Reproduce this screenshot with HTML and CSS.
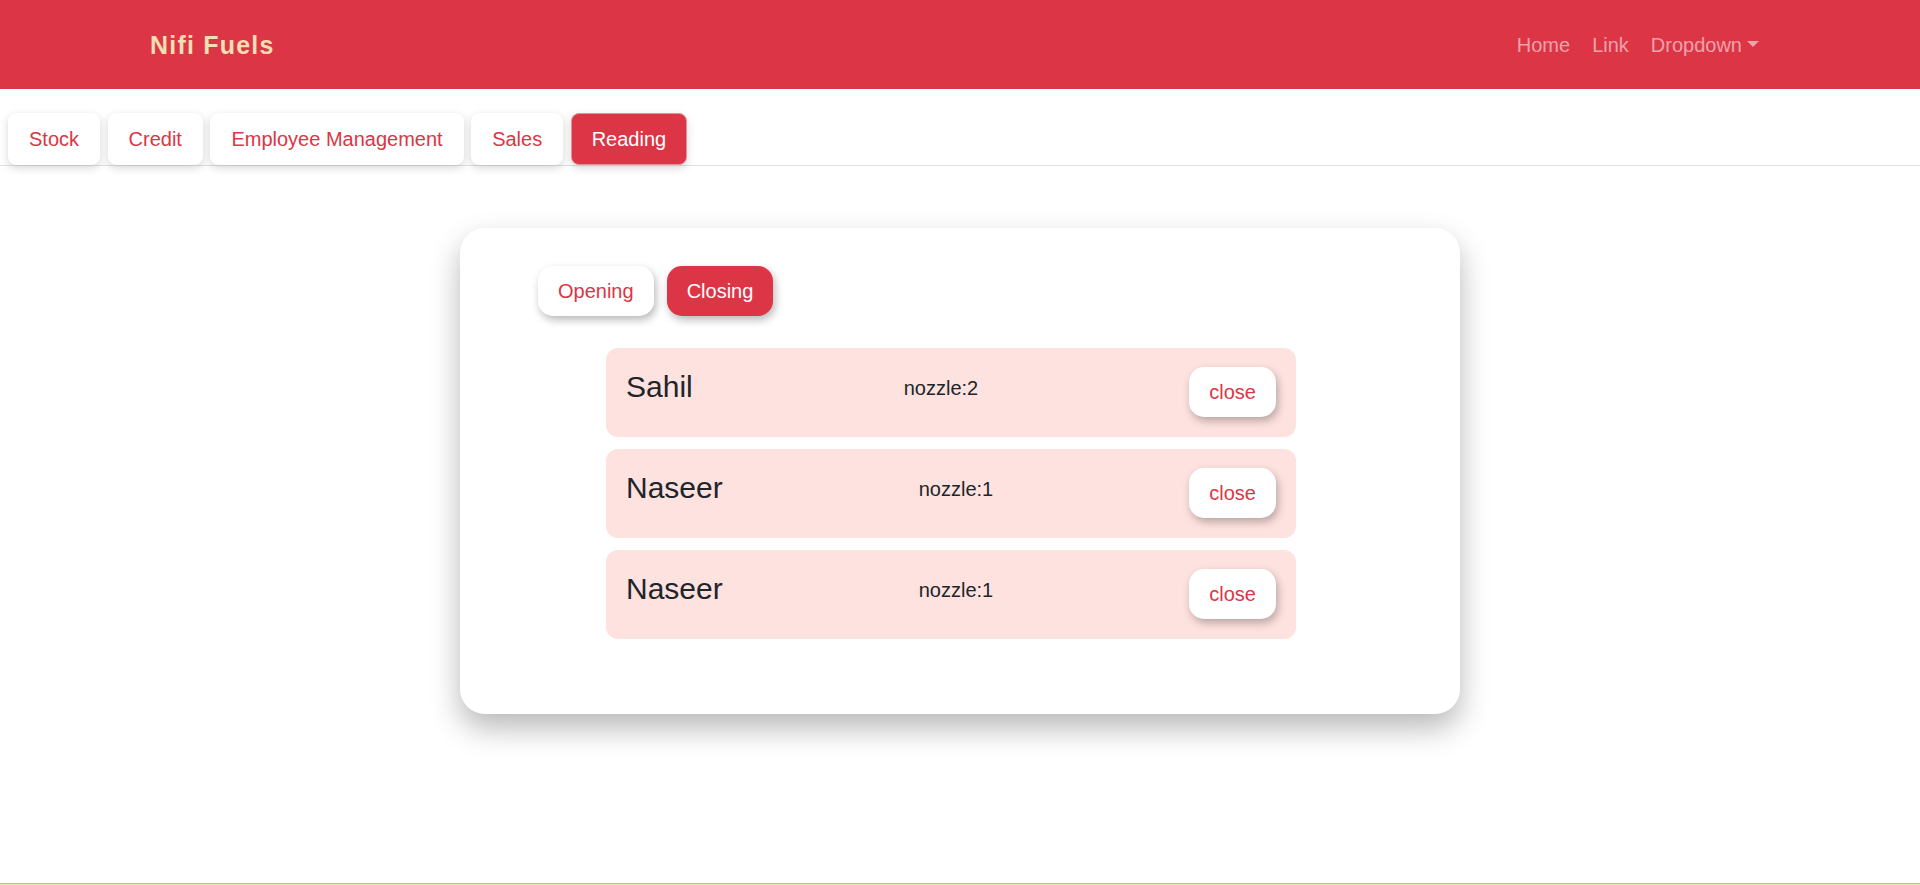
FILE: index.html
```html
<!DOCTYPE html>
<html lang="en">
<head>
<meta charset="utf-8">
<title>Nifi Fuels</title>
<link rel="stylesheet" href="styles.css">
</head>
<body>
<div class="page">
  <nav class="navbar">
    <div class="nav-inner">
      <a class="brand" href="#">Nifi Fuels</a>
      <ul class="nav-links">
        <li><a class="nav-link" href="#">Home</a></li>
        <li><a class="nav-link" href="#">Link</a></li>
        <li><a class="nav-link dropdown" href="#">Dropdown<span class="caret"></span></a></li>
      </ul>
    </div>
  </nav>

  <div class="tabs">
    <button class="tab">Stock</button>
    <button class="tab">Credit</button>
    <button class="tab">Employee Management</button>
    <button class="tab">Sales</button>
    <button class="tab tab-active">Reading</button>
  </div>

  <main class="main">
    <section class="card">
      <div class="toggle">
        <button class="pill">Opening</button>
        <button class="pill pill-active">Closing</button>
      </div>
      <div class="rows">
        <div class="row">
          <h3 class="name">Sahil</h3>
          <p class="nozzle">nozzle:2</p>
          <button class="pill">close</button>
        </div>
        <div class="row">
          <h3 class="name">Naseer</h3>
          <p class="nozzle">nozzle:1</p>
          <button class="pill">close</button>
        </div>
        <div class="row">
          <h3 class="name">Naseer</h3>
          <p class="nozzle">nozzle:1</p>
          <button class="pill">close</button>
        </div>
      </div>
    </section>
  </main>

  <footer class="bottom-line"></footer>
</div>
</body>
</html>
```

FILE: styles.css
```css
* { box-sizing: border-box; }

html, body {
  margin: 0;
  padding: 0;
}

body {
  font-family: "Liberation Sans", Arial, sans-serif;
  font-size: 20px;
  line-height: 1.5;
  color: #212529;
  background: #ffffff;
}

.page {
  min-height: 100vh;
  display: flex;
  flex-direction: column;
}

/* Navbar */
.navbar {
  background: #dc3545;
  height: 89px;
  display: flex;
  align-items: center;
}

.nav-inner {
  width: 1620px;
  margin: 0 auto;
  display: flex;
  justify-content: space-between;
  align-items: center;
}

.brand {
  font-size: 25px;
  line-height: 30px;
  font-weight: bold;
  letter-spacing: 1.2px;
  color: #f5deb3;
  text-decoration: none;
}

.nav-links {
  list-style: none;
  margin: 0;
  padding: 0;
  display: flex;
}

.nav-link {
  display: block;
  padding: 0 11px;
  line-height: 30px;
  font-size: 20px;
  color: rgba(255, 255, 255, 0.55);
  text-decoration: none;
}

.caret {
  display: inline-block;
  margin-left: 5px;
  vertical-align: 5px;
  border-top: 6px solid rgba(255, 255, 255, 0.55);
  border-left: 6px solid transparent;
  border-right: 6px solid transparent;
  border-bottom: 0;
}

/* Tabs */
.tabs {
  display: flex;
  gap: 7.5px;
  padding: 24px 8px 0;
  border-bottom: 1px solid #dee2e6;
}

.tab {
  font-family: inherit;
  font-size: 20px;
  line-height: 30px;
  padding: 10px 20px;
  border: 1px solid #ffffff;
  border-radius: 8px;
  background: #ffffff;
  color: #dc3545;
  box-shadow: 0 3px 8px rgba(0, 0, 0, 0.16);
  cursor: pointer;
}

.tab-active {
  background: #dc3545;
  border-color: #e2929a;
  color: #ffffff;
}

/* Card */
.main {
  display: flex;
  justify-content: center;
}

.card {
  width: 1000px;
  margin-top: 62px;
  padding: 38px 0 75px 78px;
  background: #ffffff;
  border-radius: 25px;
  box-shadow: 0 14px 30px rgba(0, 0, 0, 0.28);
}

.toggle {
  display: flex;
  gap: 13px;
}

.pill {
  font-family: inherit;
  font-size: 20px;
  line-height: 30px;
  padding: 10px 20px;
  border: none;
  border-radius: 15px;
  background: #ffffff;
  color: #dc3545;
  box-shadow: 2px 4px 8px rgba(0, 0, 0, 0.28);
  cursor: pointer;
}

.pill-active {
  background: #dc3545;
  color: #ffffff;
}

.rows {
  margin: 32px 0 0 68px;
  width: 690px;
  display: flex;
  flex-direction: column;
  gap: 12px;
}

.row {
  display: flex;
  justify-content: space-between;
  align-items: center;
  padding: 19px 20px 20px;
  background: #fee2df;
  border-radius: 12px;
}

.name {
  margin: 0 0 10px;
  font-size: 30px;
  line-height: 36px;
  font-weight: normal;
  color: #212529;
}

.nozzle {
  margin: 0 0 8px;
  font-size: 20px;
  line-height: 24px;
  color: #212529;
}

/* Bottom line */
.bottom-line {
  margin-top: auto;
  height: 2px;
  border-top: 1px solid #b9bf9f;
  background: #e4eda6;
}
```
